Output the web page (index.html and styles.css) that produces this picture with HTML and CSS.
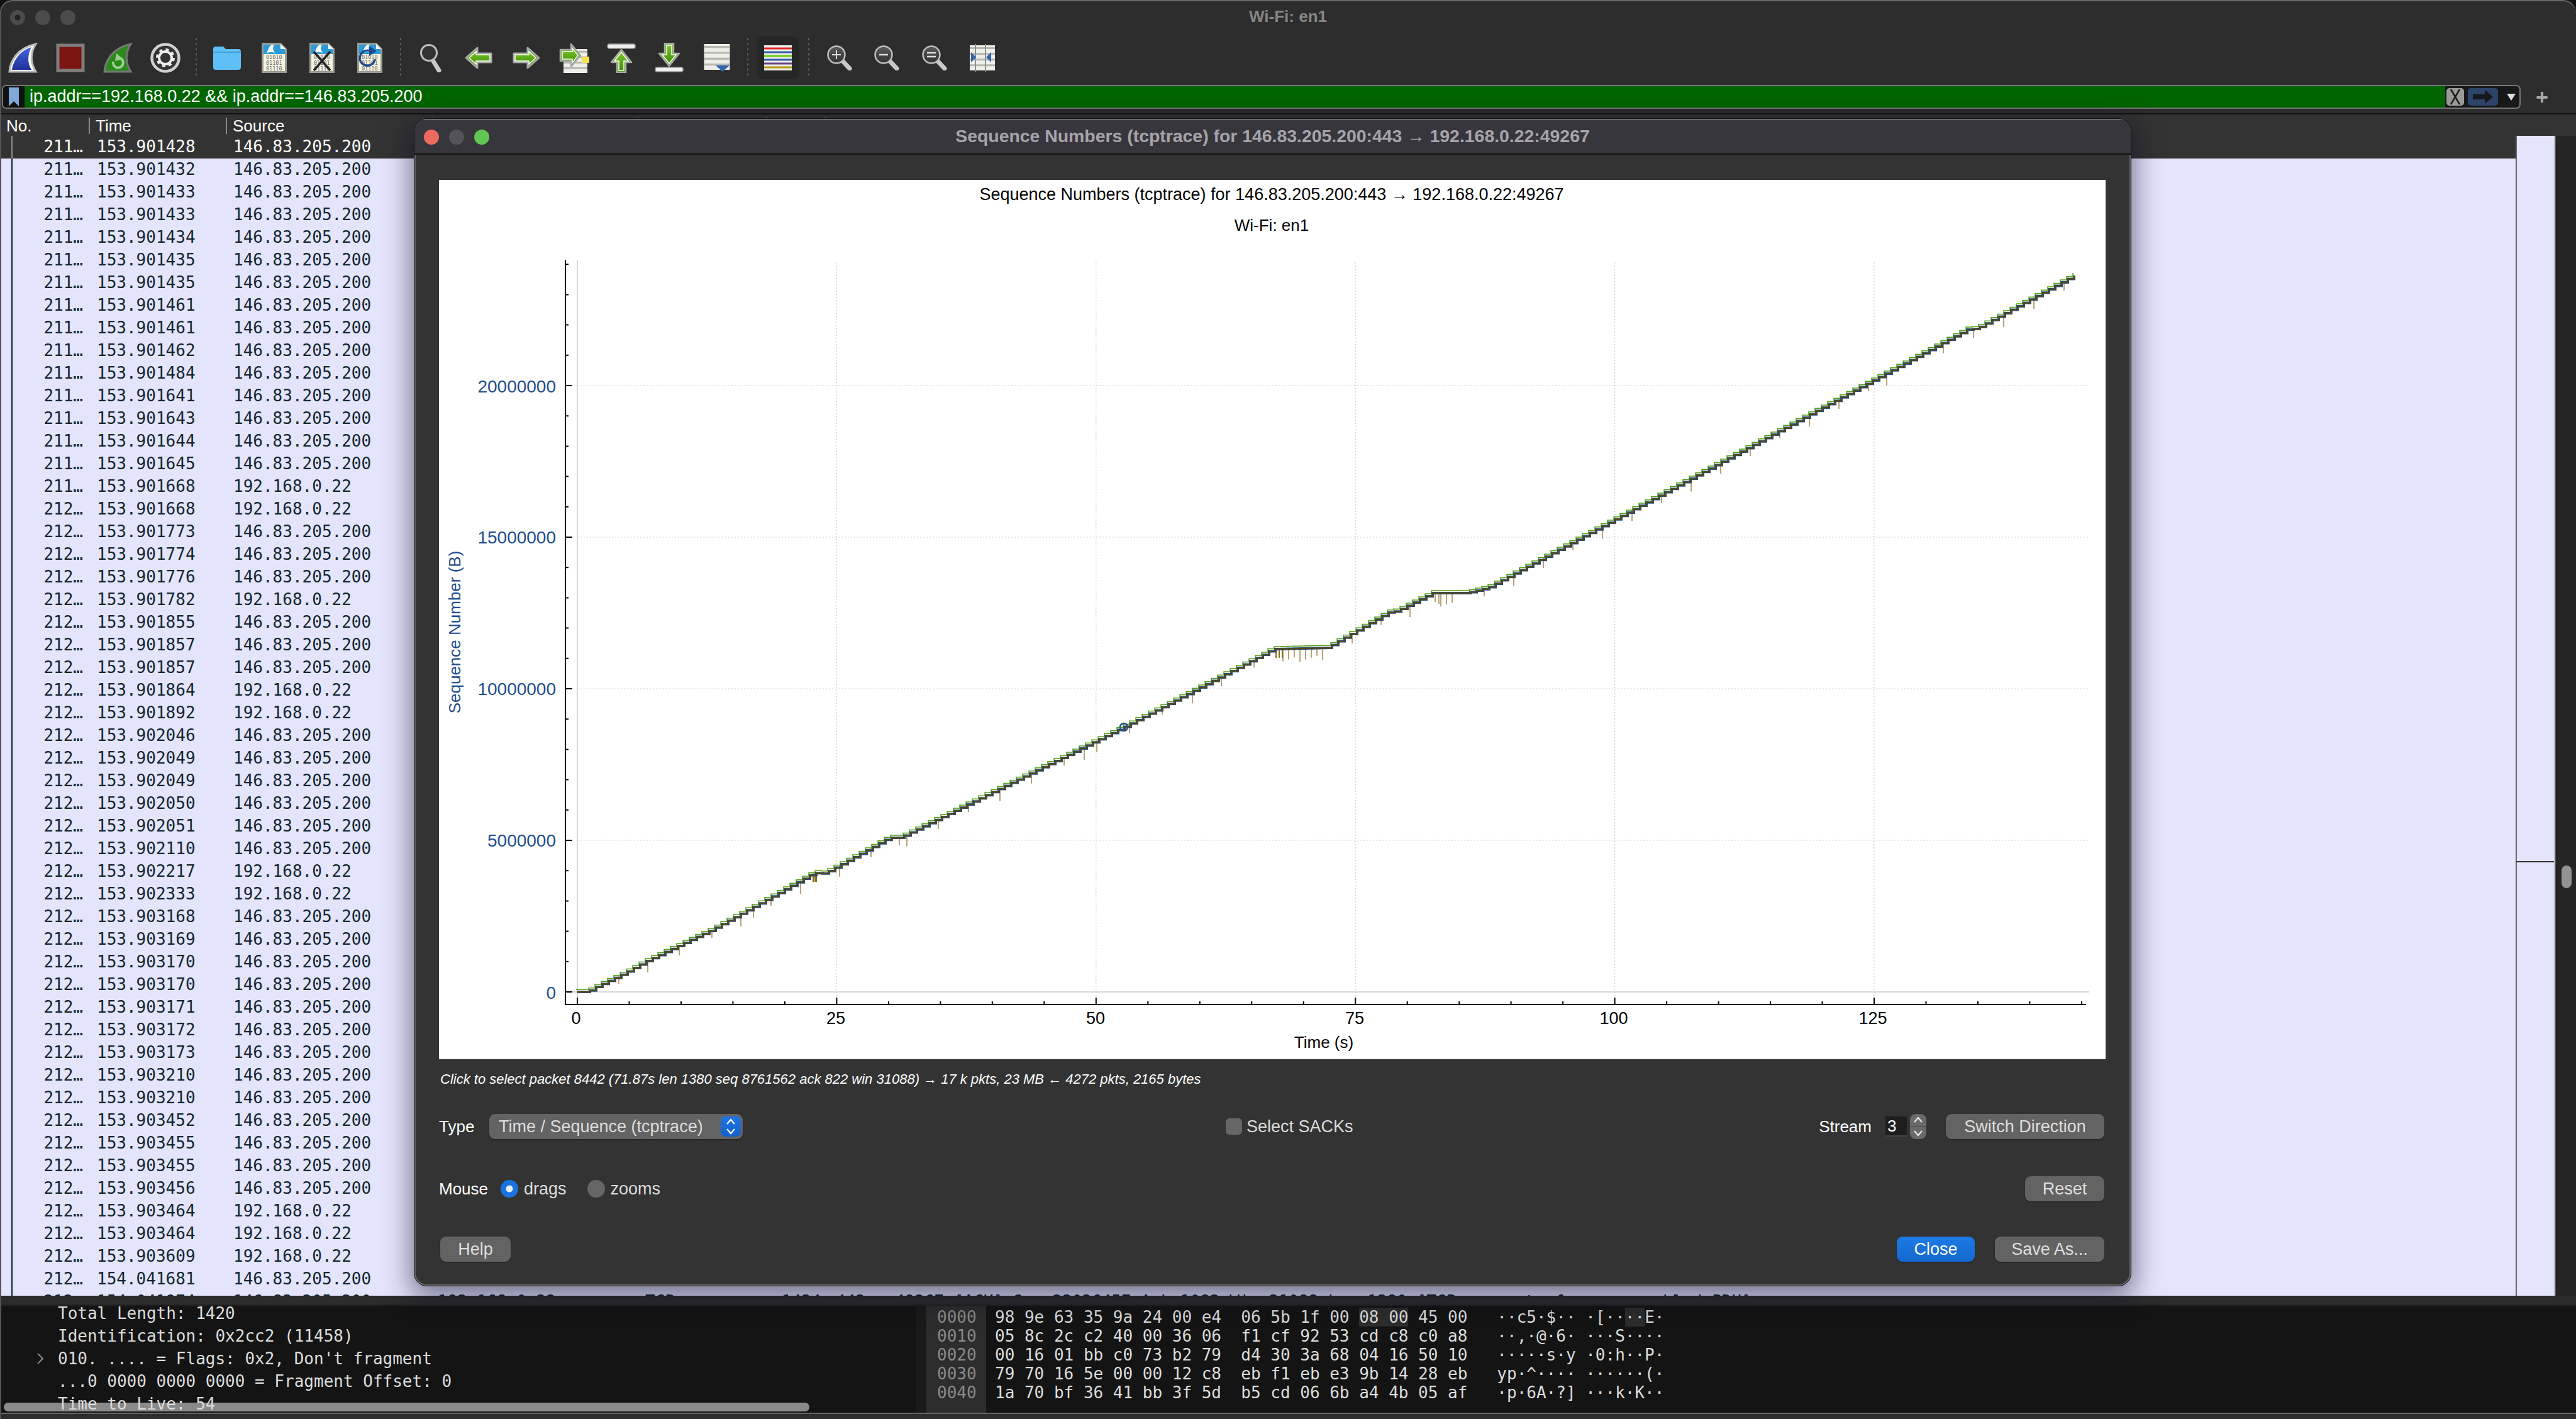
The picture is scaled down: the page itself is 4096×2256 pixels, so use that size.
FILE: index.html
```html
<!DOCTYPE html>
<html lang="en">
<head>
<meta charset="utf-8">
<title>Wi-Fi: en1</title>
<link rel="stylesheet" href="styles.css">
</head>
<body>
<svg class="defs" aria-hidden="true">
  <defs>
    <linearGradient id="gBlue" x1="0" y1="0" x2="0" y2="1"><stop offset="0" stop-color="#4467d8"/><stop offset="1" stop-color="#1f2f9c"/></linearGradient>
    <linearGradient id="gGreen" x1="0" y1="0" x2="0" y2="1"><stop offset="0" stop-color="#7cc52c"/><stop offset="1" stop-color="#3f8f02"/></linearGradient>
    <linearGradient id="gGlass" x1="0" y1="0" x2="0" y2="1"><stop offset="0" stop-color="#5a5a5a"/><stop offset="1" stop-color="#333"/></linearGradient>
    <symbol id="page" viewBox="0 0 40 48">
      <path d="M1.5 1.5H30L38.5 10V46.5H1.5Z" fill="#f6f4dc" stroke="#9a9a94" stroke-width="3"/>
      <path d="M3 3H29L37 11V18H3Z" fill="#2b9bd8"/>
      <path d="M16 3C11 6 10 13 8 17C13 14 18 14 22 17C18 13 17 8 20 3Z" fill="#fff"/>
      <path d="M30 2V10H38" fill="#fff"/>
      <text class="bits" x="7" y="26">01010</text>
      <text class="bits" x="7" y="35">01101</text>
      <text class="bits" x="7" y="44">01110</text>
    </symbol>
    <symbol id="stripes" viewBox="0 0 44 44">
      <rect width="44" height="44" fill="#eeeeea"/>
      <path d="M0 5H44M0 15H44M0 25H44M0 35H44" stroke="#b8b8ae" stroke-width="3.4"/>
    </symbol>
    <symbol id="glass" viewBox="0 0 40 40">
      <path d="M22 22L36 37" stroke="#c9c9c9" stroke-width="7" stroke-linecap="round"/>
      <circle cx="15" cy="15" r="13.5" fill="url(#gGlass)" stroke="#bdbdbd" stroke-width="2.5"/>
    </symbol>
  </defs>
</svg>

<div class="window">
  <header class="titlebar">
    <div class="lights"><i class="light idle dot"></i><i class="light idle"></i><i class="light idle"></i></div>
    <div class="wintitle">Wi-Fi: en1</div>
  </header>

  <nav class="toolbar">
    <div class="tool"><svg width="48" height="48" viewBox="0 0 48 48"><path d="M3 46C4 30 15 8 45 2C37 14 35 30 45 46Z" fill="#fff" stroke="#b9b9b9" stroke-width="3"/><path d="M7 43C9 30 18 13 38 7C32 18 31 32 38 43Z" fill="url(#gBlue)"/></svg></div>
    <div class="tool"><svg width="48" height="48" viewBox="0 0 48 48"><rect x="4" y="4" width="40" height="40" fill="#7b1512" stroke="#7e7e7e" stroke-width="5"/></svg></div>
    <div class="tool"><svg width="48" height="48" viewBox="0 0 48 48"><path d="M3 46C4 30 15 8 45 2C37 14 35 30 45 46Z" fill="#2c8a1d" stroke="#777" stroke-width="3"/><path d="M17 30A8 8 0 1 0 27 24" fill="none" stroke="#9ccf92" stroke-width="4"/><path d="M22 17L33 26L20 29Z" fill="#9ccf92"/></svg></div>
    <div class="tool"><svg width="48" height="48" viewBox="0 0 48 48"><circle cx="24" cy="24" r="21.5" fill="#333" stroke="#d0d0d0" stroke-width="4.5"/><circle cx="24" cy="24" r="10" fill="none" stroke="#eee" stroke-width="4"/><circle cx="24" cy="24" r="13" fill="none" stroke="#eee" stroke-width="4" stroke-dasharray="5 5.2"/></svg></div>
    <div class="sep"></div>
    <div class="tool"><svg width="46" height="40" viewBox="0 0 46 40"><path d="M1 6Q1 2 5 2H17L21 6H41Q45 6 45 10V35Q45 39 41 39H5Q1 39 1 35Z" fill="#5fc0f8"/><path d="M1 10H45V12H1Z" fill="#3da3e2"/></svg></div>
    <div class="tool"><svg width="40" height="48"><use href="#page"/></svg></div>
    <div class="tool"><svg width="40" height="48" viewBox="0 0 40 48"><use href="#page" width="40" height="48"/><path d="M7 14L33 44M33 14L7 44" stroke="#222" stroke-width="3.5"/></svg></div>
    <div class="tool"><svg width="40" height="48" viewBox="0 0 40 48"><use href="#page" width="40" height="48"/><path d="M28 26A12 12 0 1 1 20 13" fill="none" stroke="#1f4b8e" stroke-width="3.5"/><path d="M19 5L31 13L19 21Z" fill="#1f4b8e"/></svg></div>
    <div class="sep"></div>
    <div class="tool"><svg width="36" height="46" viewBox="0 0 36 46"><path d="M20 25L31 43" stroke="#c9c9c9" stroke-width="7" stroke-linecap="round"/><circle cx="15" cy="15" r="12.5" fill="#333" stroke="#bdbdbd" stroke-width="3"/></svg></div>
    <div class="tool"><svg width="46" height="38" viewBox="0 0 46 38"><path d="M3 19L21 3V12H43V26H21V35Z" fill="url(#gGreen)" stroke="#a8a8a8" stroke-width="3" stroke-linejoin="round"/><path d="M8 19L19 9V14H41V24H19V29Z" fill="url(#gGreen)" stroke="#fff" stroke-width="1.5"/></svg></div>
    <div class="tool"><svg width="46" height="38" viewBox="0 0 46 38"><path d="M43 19L25 3V12H3V26H25V35Z" fill="url(#gGreen)" stroke="#a8a8a8" stroke-width="3" stroke-linejoin="round"/><path d="M38 19L27 9V14H5V24H27V29Z" fill="url(#gGreen)" stroke="#fff" stroke-width="1.5"/></svg></div>
    <div class="tool"><svg width="48" height="48" viewBox="0 0 48 48"><use href="#stripes" x="4" y="10" width="44" height="38"/><rect x="36" y="22" width="12" height="10" fill="#f4df55"/><path d="M34 20L19 2V11H2V29H19V38Z" fill="url(#gGreen)" stroke="#a8a8a8" stroke-width="2.5" stroke-linejoin="round"/><path d="M30 20L21 9V14H5V26H21V32Z" fill="url(#gGreen)" stroke="#fff" stroke-width="1.5"/></svg></div>
    <div class="tool"><svg width="46" height="48" viewBox="0 0 46 48"><rect x="1" y="2" width="44" height="7" rx="3" fill="#eee" stroke="#999" stroke-width="1.5"/><path d="M23 11L39 31H30V47H16V31H7Z" fill="url(#gGreen)" stroke="#a8a8a8" stroke-width="2.5" stroke-linejoin="round"/><path d="M23 15L34 29H27V44H19V29H12Z" fill="url(#gGreen)" stroke="#fff" stroke-width="1.5"/></svg></div>
    <div class="tool"><svg width="46" height="48" viewBox="0 0 46 48"><rect x="1" y="39" width="44" height="7" rx="3" fill="#eee" stroke="#999" stroke-width="1.5"/><path d="M23 37L39 17H30V1H16V17H7Z" fill="url(#gGreen)" stroke="#a8a8a8" stroke-width="2.5" stroke-linejoin="round"/><path d="M23 33L34 19H27V4H19V19H12Z" fill="url(#gGreen)" stroke="#fff" stroke-width="1.5"/></svg></div>
    <div class="tool"><svg width="44" height="44" viewBox="0 0 44 44"><use href="#stripes" width="44" height="41"/><path d="M20 34H42L31 44Z" fill="#2f66ad"/></svg></div>
    <div class="sep"></div>
    <div class="tool active"><svg width="44" height="40" viewBox="0 0 44 40"><rect width="44" height="40" fill="#eeeeea"/><path d="M0 5H44" stroke="#e02b2b" stroke-width="3"/><path d="M0 11H44" stroke="#2f5ea8" stroke-width="3"/><path d="M0 17H44" stroke="#6ec813" stroke-width="3"/><path d="M0 23H44" stroke="#2f5ea8" stroke-width="3"/><path d="M0 29H44" stroke="#67457f" stroke-width="3"/><path d="M0 35H44" stroke="#bb9a10" stroke-width="3"/></svg></div>
    <div class="sep"></div>
    <div class="tool"><svg width="40" height="40"><use href="#glass"/><path d="M15 8V22M8 15H22" stroke="#ddd" stroke-width="2"/></svg></div>
    <div class="tool"><svg width="40" height="40"><use href="#glass"/><path d="M8 15H22" stroke="#ddd" stroke-width="2.5"/></svg></div>
    <div class="tool"><svg width="40" height="40"><use href="#glass"/><path d="M8 12H22M8 18H22" stroke="#ddd" stroke-width="2.5"/></svg></div>
    <div class="tool"><svg width="44" height="44" viewBox="0 0 44 44"><use href="#stripes" y="2" width="44" height="40"/><path d="M11 0V44M27 0V44" stroke="#8e8e8e" stroke-width="2"/><path d="M4 13L12 21L4 29ZM36 13L28 21L36 29Z" fill="#2f66ad"/></svg></div>
  </nav>

  <div class="filterrow">
    <div class="filter">
      <div class="bookmark"><svg width="16" height="34" viewBox="0 0 16 34"><path d="M0 2H16V32L8 24L0 32Z" fill="#7fa8d8"/></svg></div>
      <div class="filtertext">ip.addr==192.168.0.22 &amp;&amp; ip.addr==146.83.205.200</div>
      <div class="filterbtns">
        <span class="fbtn clear"><svg width="24" height="30" viewBox="0 0 24 30"><path d="M5 3L19 27M19 3L5 27" stroke="#1c1c1c" stroke-width="2.5"/></svg></span>
        <span class="fbtn apply"><svg width="34" height="24" viewBox="0 0 34 24"><path d="M1 8H20V1L33 12L20 23V16H1Z" fill="#16181c"/></svg></span>
        <span class="drop"></span>
      </div>
    </div>
    <div class="plus">+</div>
  </div>

  <section class="list">
    <div class="listhead">
      <span>No.</span><span>Time</span><span>Source</span><span>Destination</span><span>Protocol</span><span>Length</span><span>Info</span>
    </div>
    <div class="listbody">
      <div class="rows">
        <div class="row dark"><span class="no">211…</span><span>153.901428</span><span>146.83.205.200</span></div>
        <div class="row"><span class="no">211…</span><span>153.901432</span><span>146.83.205.200</span></div>
        <div class="row"><span class="no">211…</span><span>153.901433</span><span>146.83.205.200</span></div>
        <div class="row"><span class="no">211…</span><span>153.901433</span><span>146.83.205.200</span></div>
        <div class="row"><span class="no">211…</span><span>153.901434</span><span>146.83.205.200</span></div>
        <div class="row"><span class="no">211…</span><span>153.901435</span><span>146.83.205.200</span></div>
        <div class="row"><span class="no">211…</span><span>153.901435</span><span>146.83.205.200</span></div>
        <div class="row"><span class="no">211…</span><span>153.901461</span><span>146.83.205.200</span></div>
        <div class="row"><span class="no">211…</span><span>153.901461</span><span>146.83.205.200</span></div>
        <div class="row"><span class="no">211…</span><span>153.901462</span><span>146.83.205.200</span></div>
        <div class="row"><span class="no">211…</span><span>153.901484</span><span>146.83.205.200</span></div>
        <div class="row"><span class="no">211…</span><span>153.901641</span><span>146.83.205.200</span></div>
        <div class="row"><span class="no">211…</span><span>153.901643</span><span>146.83.205.200</span></div>
        <div class="row"><span class="no">211…</span><span>153.901644</span><span>146.83.205.200</span></div>
        <div class="row"><span class="no">211…</span><span>153.901645</span><span>146.83.205.200</span></div>
        <div class="row"><span class="no">211…</span><span>153.901668</span><span>192.168.0.22</span></div>
        <div class="row"><span class="no">212…</span><span>153.901668</span><span>192.168.0.22</span></div>
        <div class="row"><span class="no">212…</span><span>153.901773</span><span>146.83.205.200</span></div>
        <div class="row"><span class="no">212…</span><span>153.901774</span><span>146.83.205.200</span></div>
        <div class="row"><span class="no">212…</span><span>153.901776</span><span>146.83.205.200</span></div>
        <div class="row"><span class="no">212…</span><span>153.901782</span><span>192.168.0.22</span></div>
        <div class="row"><span class="no">212…</span><span>153.901855</span><span>146.83.205.200</span></div>
        <div class="row"><span class="no">212…</span><span>153.901857</span><span>146.83.205.200</span></div>
        <div class="row"><span class="no">212…</span><span>153.901857</span><span>146.83.205.200</span></div>
        <div class="row"><span class="no">212…</span><span>153.901864</span><span>192.168.0.22</span></div>
        <div class="row"><span class="no">212…</span><span>153.901892</span><span>192.168.0.22</span></div>
        <div class="row"><span class="no">212…</span><span>153.902046</span><span>146.83.205.200</span></div>
        <div class="row"><span class="no">212…</span><span>153.902049</span><span>146.83.205.200</span></div>
        <div class="row"><span class="no">212…</span><span>153.902049</span><span>146.83.205.200</span></div>
        <div class="row"><span class="no">212…</span><span>153.902050</span><span>146.83.205.200</span></div>
        <div class="row"><span class="no">212…</span><span>153.902051</span><span>146.83.205.200</span></div>
        <div class="row"><span class="no">212…</span><span>153.902110</span><span>146.83.205.200</span></div>
        <div class="row"><span class="no">212…</span><span>153.902217</span><span>192.168.0.22</span></div>
        <div class="row"><span class="no">212…</span><span>153.902333</span><span>192.168.0.22</span></div>
        <div class="row"><span class="no">212…</span><span>153.903168</span><span>146.83.205.200</span></div>
        <div class="row"><span class="no">212…</span><span>153.903169</span><span>146.83.205.200</span></div>
        <div class="row"><span class="no">212…</span><span>153.903170</span><span>146.83.205.200</span></div>
        <div class="row"><span class="no">212…</span><span>153.903170</span><span>146.83.205.200</span></div>
        <div class="row"><span class="no">212…</span><span>153.903171</span><span>146.83.205.200</span></div>
        <div class="row"><span class="no">212…</span><span>153.903172</span><span>146.83.205.200</span></div>
        <div class="row"><span class="no">212…</span><span>153.903173</span><span>146.83.205.200</span></div>
        <div class="row"><span class="no">212…</span><span>153.903210</span><span>146.83.205.200</span></div>
        <div class="row"><span class="no">212…</span><span>153.903210</span><span>146.83.205.200</span></div>
        <div class="row"><span class="no">212…</span><span>153.903452</span><span>146.83.205.200</span></div>
        <div class="row"><span class="no">212…</span><span>153.903455</span><span>146.83.205.200</span></div>
        <div class="row"><span class="no">212…</span><span>153.903455</span><span>146.83.205.200</span></div>
        <div class="row"><span class="no">212…</span><span>153.903456</span><span>146.83.205.200</span></div>
        <div class="row"><span class="no">212…</span><span>153.903464</span><span>192.168.0.22</span></div>
        <div class="row"><span class="no">212…</span><span>153.903464</span><span>192.168.0.22</span></div>
        <div class="row"><span class="no">212…</span><span>153.903609</span><span>192.168.0.22</span></div>
        <div class="row"><span class="no">212…</span><span>154.041681</span><span>146.83.205.200</span></div>
        <div class="row"><span class="no">212…</span><span>154.041974</span><span>146.83.205.200</span><span>192.168.0.22</span><span>TCP</span><span>1434</span><span>443 → 49267 [ACK] Seq=23036457 Ack=1082 Win=31088 Len=1380 [TCP segment of a reassembled PDU]</span></div>
        <div class="scrollmark"></div>
      </div>
      <div class="vscroll"><div class="vthumb"></div></div>
    </div>
  </section>

  <div class="strip"></div>

  <section class="panes">
    <div class="detail">
      <div class="dline first">Total Length: 1420</div>
      <div class="dline">Identification: 0x2cc2 (11458)</div>
      <div class="dline"><svg class="chev" width="12" height="20" viewBox="0 0 12 20"><path d="M2 2L10 10L2 18" fill="none" stroke="#8a8a8a" stroke-width="2"/></svg>010. .... = Flags: 0x2, Don't fragment</div>
      <div class="dline">...0 0000 0000 0000 = Fragment Offset: 0</div>
      <div class="dline">Time to Live: 54</div>
      <div class="hthumb"></div>
    </div>
    <div class="hex">
      <div class="offsets">0000
0010
0020
0030
0040</div>
      <div class="bytes">98 9e 63 35 9a 24 00 e4  06 5b 1f 00 <mark>08 00</mark> 45 00   ··c5·$·· ·[··<mark>··</mark>E·
05 8c 2c c2 40 00 36 06  f1 cf 92 53 cd c8 c0 a8   ··,·@·6· ···S····
00 16 01 bb c0 73 b2 79  d4 30 3a 68 04 16 50 10   ·····s·y ·0:h··P·
79 70 16 5e 00 00 12 c8  eb f1 eb e3 9b 14 28 eb   yp·^···· ······(·
1a 70 bf 36 41 bb 3f 5d  b5 cd 06 6b a4 4b 05 af   ·p·6A·?] ···k·K··</div>
    </div>
  </section>
</div>

<div class="dialog">
  <div class="dlgtitle">
    <div class="lights"><i class="light red"></i><i class="light gray"></i><i class="light green"></i></div>
    <div class="dlgname">Sequence Numbers (tcptrace) for 146.83.205.200:443 → 192.168.0.22:49267</div>
  </div>
  <div class="dlgbody">
    <svg class="chart" viewBox="698 286 2650 1398">
      <rect x="698" y="286" width="2650" height="1398" fill="#fff"/>
      <text class="ctitle" x="2022" y="318">Sequence Numbers (tcptrace) for 146.83.205.200:443 → 192.168.0.22:49267</text>
      <text class="csub" x="2022" y="367">Wi-Fi: en1</text>
      <path id="gridDots" class="griddot"/>
      <path class="gridzero" d="M918 413V1597M899 1577H3322"/>
      <path id="axes" class="axis"/>
      <text class="ylab" x="884" y="1346">5000000</text>
      <text class="ylab" x="884" y="1105">10000000</text>
      <text class="ylab" x="884" y="864">15000000</text>
      <text class="ylab" x="884" y="624">20000000</text>
      <text class="ylab" x="884" y="1588">0</text>
      <text class="xlab" x="916" y="1628">0</text>
      <text class="xlab" x="1329" y="1628">25</text>
      <text class="xlab" x="1742" y="1628">50</text>
      <text class="xlab" x="2154" y="1628">75</text>
      <text class="xlab" x="2566" y="1628">100</text>
      <text class="xlab" x="2978" y="1628">125</text>
      <text class="xtitle" x="2105" y="1666">Time (s)</text>
      <text class="ytitle" transform="translate(732 1005) rotate(-90)">Sequence Number (B)</text>
      <path id="sackTicks" class="sack"/>
      <path id="sackDark" class="sackdark"/>
      <path id="winLine" class="win"/>
      <path id="segLine" class="seg"/>
      <path id="ackLine" class="ack"/>
      <circle class="picked" cx="1787" cy="1156" r="6"/>
    </svg>
    <div class="status">Click to select packet 8442 (71.87s len 1380 seq 8761562 ack 822 win 31088) → 17 k pkts, 23 MB ← 4272 pkts, 2165 bytes</div>
    <div class="ctlrow first">
      <div class="ctl-left">
        <span class="lab typelab">Type</span>
        <div class="combo"><span>Time / Sequence (tcptrace)</span><span class="cstep"><svg width="20" height="28" viewBox="0 0 20 28"><path d="M4 10L10 3L16 10M4 18L10 25L16 18" fill="none" stroke="#fff" stroke-width="2.2"/></svg></span></div>
      </div>
      <div class="sacks"><i class="check"></i><span>Select SACKs</span></div>
      <div class="ctl-right">
        <span class="lab">Stream</span>
        <span class="spinval">3</span>
        <span class="spin"><svg width="26" height="40" viewBox="0 0 26 40"><path d="M7 13L13 6L19 13M7 27L13 34L19 27" fill="none" stroke="#e8e8e8" stroke-width="2.2"/><path d="M0 20H26" stroke="#555" stroke-width="2"/></svg></span>
        <button class="btn switch">Switch Direction</button>
      </div>
    </div>
    <div class="ctlrow second">
      <span class="lab mouselab">Mouse</span>
      <i class="radio on"></i><span class="radiotext">drags</span>
      <i class="radio"></i><span class="radiotext">zooms</span>
      <button class="btn reset">Reset</button>
    </div>
    <div class="ctlrow third">
      <button class="btn help">Help</button>
      <button class="btn primary">Close</button>
      <button class="btn saveas">Save As...</button>
    </div>
  </div>
</div>
<script src="chart.js"></script>
</body>
</html>
```

FILE: styles.css
```css
* { box-sizing: border-box; }
html, body { margin: 0; padding: 0; background: #111; }
body { width: 4096px; height: 2256px; overflow: hidden; position: relative; font-family: "Liberation Sans", Arial, sans-serif; font-size: 26px; color: #fff; }
.defs { width: 0; height: 0; display: block; position: absolute; }
.bits { font-family: "DejaVu Sans Mono", monospace; font-size: 8.5px; fill: #667; }

.window { width: 4096px; height: 2256px; background: #2d2d2d; display: flex; flex-direction: column; position: relative; border-radius: 20px 20px 0 0; overflow: hidden; }
.window::after { content: ""; position: absolute; inset: 0; border-radius: 20px 20px 0 0; box-shadow: inset 0 2px 0 #6a6a6a, inset 2px 0 0 #555; pointer-events: none; }

.titlebar { height: 58px; flex: none; display: flex; align-items: center; justify-content: center; position: relative; }
.lights { display: flex; gap: 16px; position: absolute; top: 16px; left: 16px; }
.light { width: 24px; height: 24px; border-radius: 50%; display: block; }
.light.idle { background: #4b4b4b; }
.light.dot { background: radial-gradient(circle, #222 0 4px, #4b4b4b 5px); }
.wintitle { font-weight: bold; color: #858585; font-size: 26px; margin-top: -6px; }

.toolbar { height: 68px; flex: none; display: flex; align-items: center; margin-left: -2px; }
.tool { width: 75.8px; height: 68px; display: flex; align-items: center; justify-content: center; flex: none; border-radius: 10px; }
.tool.active { background: #262626; width: 68px; margin: 0 3.9px; }
.sep { width: 21.5px; height: 62px; flex: none; margin: 0; background: repeating-linear-gradient(#666 0 3px, transparent 3px 8px) center / 2px 100% no-repeat; }

.filterrow { height: 38px; margin-top: 9px; flex: none; display: flex; align-items: center; padding-left: 3px; }
.filter { width: 4005px; height: 38px; border: 2px solid #777; border-radius: 7px; display: flex; background: #17181a; overflow: hidden; }
.bookmark { width: 34px; flex: none; display: flex; align-items: center; justify-content: center; background: #111; }
.filtertext { flex: 1; background: #006400; color: #fff; padding-left: 8px; line-height: 33px; font-size: 27px; }
.filterbtns { width: 118px; flex: none; display: flex; align-items: center; gap: 6px; padding-left: 2px; }
.fbtn { height: 28px; border-radius: 5px; display: flex; align-items: center; justify-content: center; flex: none; }
.clear { width: 28px; background: #9a9a96; }
.apply { width: 48px; background: #2b4468; }
.drop { width: 0; height: 0; margin-left: 8px; border-left: 7px solid transparent; border-right: 7px solid transparent; border-top: 11px solid #ddd; }
.plus { width: 68px; flex: none; text-align: center; color: #aaa; font-weight: bold; font-size: 34px; line-height: 36px; }

.list { margin-top: 7px; height: 1880px; flex: none; display: flex; flex-direction: column; border-top: 2px solid #111; background: #333; font-family: "DejaVu Sans Mono", monospace; }
.listhead { height: 34px; flex: none; display: grid; grid-template-columns: 141px 218px 327px 328px 205px 92px 1fr; font-family: "Liberation Sans", Arial, sans-serif; align-items: center; color: #fff; padding-top: 2px; }
.listhead span { display: block; height: 26px; line-height: 26px; padding-left: 9px; border-left: 2px solid #8a8a8a; }
.listhead span:first-child { border-left: 0; padding-left: 10px; }
.listbody { height: 1844px; flex: none; display: flex; }
.rows { width: 4062px; flex: none; height: 1844px; overflow: hidden; position: relative; }
.row { height: 36px; display: grid; grid-template-columns: 154px 217px 325px 330px 217px 86px 1fr; white-space: pre; line-height: 34px; color: #12272e; background: linear-gradient(#12272e, #12272e) 18px 0 / 2px 100% no-repeat, linear-gradient(#666, #666) 4000px 0 / 2px 100% no-repeat, #e4e4fc; }
.row.dark { color: #fff; background: linear-gradient(#8a8a8a, #8a8a8a) 18px 0 / 2px 100% no-repeat, linear-gradient(#666, #666) 4000px 0 / 2px 100% no-repeat, linear-gradient(to right, #333 4000px, #e4e4fc 4000px); }
.no { text-align: right; padding-right: 22px; }
.scrollmark { position: absolute; left: 4001px; top: 1153px; width: 60px; height: 2px; background: #333; }
.vscroll { flex: 1; background: #252525; border-left: 2px solid #555; padding: 1160px 0 0 9px; }
.vthumb { width: 16px; height: 36px; border-radius: 8px; background: #929292; }

.strip { height: 16px; flex: none; background: #2c2c2c; border-bottom: 2px solid #202020; }

.panes { height: 172px; flex: none; display: flex; background: #1a1a1a; font-family: "DejaVu Sans Mono", monospace; color: #dcdcdc; border-bottom: 2px solid #666; }
.detail { width: 1456px; flex: none; background: #141414; padding-left: 92px; overflow: hidden; position: relative; }
.dline { height: 36px; line-height: 36px; white-space: pre; position: relative; z-index: 1; }
.dline.first { margin-top: -6px; }
.chev { position: absolute; left: -34px; top: 8px; }
.hthumb { position: absolute; left: 6px; top: 154px; width: 1281px; height: 14px; border-radius: 7px; background: #8a8a8a; }
.hex { margin-left: 17px; flex: 1; background: #141414; display: flex; white-space: pre; line-height: 30px; }
.offsets { width: 95px; background: #2d2d2d; padding: 3px 0 0 17px; color: #8a8a8a; flex: none; }
.bytes { padding: 3px 0 0 14px; }
.bytes mark { background: #2d2d2d; color: inherit; }

.dialog { position: absolute; left: 659px; top: 189px; width: 2729px; height: 1855px; border-radius: 20px; background: #333; box-shadow: 0 0 0 1px #111, inset 0 0 0 2px #666, 0 14px 44px 6px rgba(10, 10, 40, .5); overflow: hidden; }
.dlgtitle { height: 57px; background: #38363d; border-bottom: 2px solid #111; display: flex; align-items: center; justify-content: center; position: relative; box-shadow: inset 0 2px 0 #6a6a6a; }
.dlgtitle .lights { top: 17px; left: 15px; }
.light.red { background: #ec6a5e; }
.light.gray { background: #55535a; }
.light.green { background: #61c554; }
.dlgname { font-weight: bold; color: #a6a4aa; font-size: 28.4px; }
.dlgbody { padding: 40px 40px 0 39px; }
.chart { width: 2650px; height: 1398px; display: block; font-family: "Liberation Sans", Arial, sans-serif; }
.ctitle { font-size: 27px; fill: #000; text-anchor: middle; }
.csub { font-size: 26px; fill: #000; text-anchor: middle; }
.ylab { font-size: 28px; fill: #1f4e8f; text-anchor: end; }
.xlab, .xtitle { font-size: 27px; fill: #000; text-anchor: middle; }
.xtitle { font-size: 26px; }
.ytitle { font-size: 26px; fill: #1f4e8f; text-anchor: middle; }
.griddot { fill: none; stroke: #cfcfcf; stroke-width: 1.2; stroke-dasharray: 2 3; }
.gridzero { fill: none; stroke: #cacaca; stroke-width: 1.5; }
.axis { fill: none; stroke: #000; stroke-width: 2; }
.sack { fill: none; stroke: #b9a274; stroke-width: 2; }
.sackdark { fill: none; stroke: #8a6a1c; stroke-width: 2; }
.win { fill: none; stroke: #52a010; stroke-width: 1.5; }
.seg { fill: none; stroke: #22548f; stroke-width: 4; }
.ack { fill: none; stroke: #54461c; stroke-width: 2.4; }
.picked { fill: none; stroke: #22548f; stroke-width: 2.5; }

.status { height: 36px; margin-top: 14px; line-height: 36px; font-style: italic; font-size: 22px; color: #fff; padding-left: 2px; }
.ctlrow { display: flex; align-items: center; padding-right: 2px; }
.ctlrow.first { height: 44px; margin-top: 35px; }
.ctlrow.second { height: 40px; margin-top: 57px; }
.ctlrow.third { height: 40px; margin-top: 56px; padding-left: 2px; }
.ctl-left { width: 1251px; flex: none; display: flex; align-items: center; }
.lab { color: #fff; font-size: 26px; }
.typelab { width: 80px; }
.combo { width: 403px; height: 40px; background: #636363; border-radius: 9px; display: flex; align-items: center; justify-content: space-between; color: #dcdcdc; padding: 0 3px 0 15px; font-size: 27px; box-shadow: 0 1px 2px rgba(0, 0, 0, .4); }
.cstep { width: 32px; height: 32px; background: linear-gradient(#1d75e6, #1460c8); border-radius: 7px; display: flex; align-items: center; justify-content: center; }
.sacks { display: flex; align-items: center; gap: 7px; color: #dcdcdc; font-size: 27px; }
.check { width: 26px; height: 26px; background: #666; border-radius: 6px; display: block; }
.ctl-right { margin-left: auto; display: flex; align-items: center; }
.spinval { width: 34px; height: 32px; background: #1e1e1e; border-bottom: 2px solid #444; margin-left: 22px; padding-left: 3px; line-height: 30px; color: #fff; font-size: 26px; }
.spin { width: 26px; height: 40px; border-radius: 9px; background: #6a6a6a; margin-left: 5px; display: block; }
.spin svg { display: block; }
.btn { height: 40px; border: 0; border-radius: 9px; background: #636363; color: #dedede; font: 27px "Liberation Sans", Arial, sans-serif; padding: 0; box-shadow: 0 1px 2px rgba(0, 0, 0, .4); }
.switch { width: 252px; margin-left: 31px; }
.reset { width: 126px; margin-left: auto; }
.mouselab { width: 98px; }
.radio { width: 28px; height: 28px; border-radius: 50%; background: #666; display: block; flex: none; }
.radio.on { background: radial-gradient(circle, #e6effc 0 5px, #1a73e0 6px); }
.radiotext { color: #dcdcdc; font-size: 27px; margin: 0 33px 0 9px; }
.help { width: 112px; }
.primary { width: 124px; margin-left: auto; background: linear-gradient(#1c7ae6, #1468cc); color: #fff; }
.saveas { width: 174px; margin-left: 32px; }
```

FILE: chart.js
```js
// Plots the TCP stream curve from sampled pixel-space points of the graph.
var curve = [[918,1577],[934,1577],[950,1568],[984,1552],[1030,1527],[1132,1478],[1225,1427],[1294,1388],[1311,1389],[1376,1353],[1414,1332],[1431,1332],[1787,1156],[2025,1032],[2110,1030],[2207,974],[2220,972],[2278,943],[2332,943],[2365,935],[3130,523],[3142,523],[3300,437]];

function yAt(x) {
  for (var i = 1; i < curve.length; i++) {
    if (x <= curve[i][0]) {
      var a = curve[i - 1], b = curve[i];
      return a[1] + (b[1] - a[1]) * (x - a[0]) / (b[0] - a[0]);
    }
  }
  return curve[curve.length - 1][1];
}

function stairs(dx, dy, step) {
  var d = "M" + (918 + dx) + " " + (yAt(918) + dy);
  for (var x = 918 + step; x <= 3302; x += step) {
    d += "H" + (x + dx).toFixed(1) + "V" + (yAt(x) + dy).toFixed(1);
  }
  return d;
}

function set(id, d) { document.getElementById(id).setAttribute("d", d); }

set("segLine", stairs(0, 0, 10));
set("ackLine", stairs(0, 0, 10));
set("winLine", stairs(-2, -4, 10));

var grid = "", axes = "M899 413V1597H3317", x, y;
for (x = 918 + 412.4; x < 3300; x += 412.4) grid += "M" + x.toFixed(1) + " 417V1597";
for (y = 1336; y > 420; y -= 241) grid += "M918 " + y + "H3322";
for (var t = 0; t <= 145; t += 5) {
  x = 918 + t * 16.496;
  axes += "M" + x.toFixed(1) + " 1597V" + (t % 25 === 0 ? 1586 : 1592);
}
for (var m = 0; m <= 24; m++) {
  y = 1577 - m * 48.2;
  axes += "M899 " + y.toFixed(1) + "H" + (m % 5 === 0 ? 910 : 904);
}
set("gridDots", grid);
set("axes", axes);

var ticks = [984,1030,1080,1132,1178,1198,1226,1273,1335,1385,1430,1442,1492,1540,1590,1640,1692,1724,1744,1796,1848,1896,1942,1994];
for (x = 2040; x < 2105; x += 9) ticks.push(x);
for (x = 2150; x < 2290; x += 46) ticks.push(x);
for (x = 2282; x < 2310; x += 9) ticks.push(x);
for (x = 2360; x < 3000; x += 47) ticks.push(x);
ticks.push(3000, 3090, 3138, 3186, 3234, 3282);
var sack = "";
ticks.forEach(function (tx, i) {
  var top = yAt(tx);
  sack += "M" + tx + " " + top.toFixed(1) + "V" + (top + 12 + (i * 7) % 10).toFixed(1);
});
set("sackTicks", sack);
var dark = "";
[1293, 1296, 1298, 2029, 2034, 2039].forEach(function (tx) {
  var top = yAt(tx);
  dark += "M" + tx + " " + top.toFixed(1) + "V" + (top + 14).toFixed(1);
});
set("sackDark", dark);
```
